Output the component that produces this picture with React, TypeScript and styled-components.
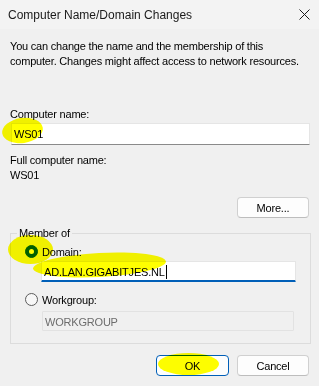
import styled, { createGlobalStyle } from 'styled-components';

const GlobalStyle = createGlobalStyle`
  html, body {
    margin: 0;
    padding: 0;
    background: #f0f0f0;
  }
  body {
    font-family: 'Liberation Sans', Arial, sans-serif;
    font-size: 11px;
    letter-spacing: -0.2px;
    color: #000;
  }
`;

const Dialog = styled.div`
  position: relative;
  width: 319px;
  height: 386px;
  background: #f0f0f0;
  display: flex;
  flex-direction: column;
  overflow: hidden;
`;

const TitleBar = styled.div`
  height: 29px;
  background: #f3f3f3;
  display: flex;
  align-items: center;
  justify-content: space-between;
  padding: 0 9px 0 8px;
  box-sizing: border-box;
`;

const Title = styled.span`
  font-size: 12px;
  letter-spacing: 0;
  color: #1a1a1a;
`;

const Body = styled.div`
  display: flex;
  flex-direction: column;
  padding: 10px 8px 0 10px;
`;

const Text = styled.div<{ $top?: number }>`
  line-height: 15px;
  margin-top: ${(p) => p.$top ?? 0}px;
  white-space: nowrap;
`;

const TextBox = styled.div<{ $top?: number; $focused?: boolean; $disabled?: boolean }>`
  box-sizing: border-box;
  height: ${(p) => (p.$disabled ? 20 : p.$focused ? 21 : 22)}px;
  margin-top: ${(p) => p.$top ?? 0}px;
  padding: 3px 2px 0;
  line-height: 14px;
  background: ${(p) => (p.$disabled ? '#f0f0f0' : '#fff')};
  color: ${(p) => (p.$disabled ? '#6d6d6d' : '#000')};
  border: 1px solid ${(p) => (p.$disabled ? '#e2e2e2' : '#e5e5e5')};
  border-bottom: ${(p) =>
    p.$focused ? '2px solid #005fb8' : p.$disabled ? '1px solid #e2e2e2' : '1px solid #8a8a8a'};
  border-radius: 1px;
  white-space: nowrap;
`;

const Caret = styled.span`
  display: inline-block;
  width: 1px;
  height: 14px;
  margin-left: 1px;
  background: #000;
  vertical-align: -3px;
`;

const Button = styled.button<{ $default?: boolean }>`
  box-sizing: border-box;
  height: 21px;
  padding: 0;
  font-family: inherit;
  font-size: 11px;
  letter-spacing: inherit;
  color: #000;
  background: #fdfdfd;
  border: 1px solid ${(p) => (p.$default ? '#005fb8' : '#d0d0d0')};
  border-bottom-color: ${(p) => (p.$default ? '#005fb8' : '#bdbdbd')};
  border-radius: 4px;
`;

const MoreButton = styled(Button)`
  align-self: flex-end;
  width: 72px;
  margin: 14px 2px 0 0;
`;

const Group = styled.fieldset`
  margin: 8px 0 0;
  padding: 0 14px 12px 6px;
  border: 1px solid #dcdcdc;
  min-inline-size: 0;
  display: flex;
  flex-direction: column;
`;

const Legend = styled.legend`
  padding: 0 2px;
  line-height: 15px;
`;

const RadioRow = styled.div<{ $top: number }>`
  display: flex;
  align-items: center;
  gap: 4px;
  height: 15px;
  margin: ${(p) => p.$top}px 0 0 8px;
`;

const Radio = styled.span<{ $checked?: boolean }>`
  box-sizing: border-box;
  width: 13px;
  height: 13px;
  border-radius: 50%;
  display: flex;
  align-items: center;
  justify-content: center;
  background: ${(p) => (p.$checked ? '#005fb8' : '#f7f7f7')};
  border: 1px solid ${(p) => (p.$checked ? '#005fb8' : '#5c5c5c')};
  &::after {
    content: '';
    display: ${(p) => (p.$checked ? 'block' : 'none')};
    width: 5px;
    height: 5px;
    border-radius: 50%;
    background: #fff;
  }
`;

const Indented = styled.div<{ $right?: number }>`
  margin: 0 ${(p) => p.$right ?? 0}px 0 24px;
  display: flex;
  flex-direction: column;
`;

const Footer = styled.div`
  display: flex;
  justify-content: flex-end;
  gap: 8px;
  margin: 11px 2px 0 0;
`;

const Highlight = styled.span<{ $x: number; $y: number; $w: number; $h: number; $rot?: number }>`
  position: absolute;
  left: ${(p) => p.$x}px;
  top: ${(p) => p.$y}px;
  width: ${(p) => p.$w}px;
  height: ${(p) => p.$h}px;
  border-radius: 50%;
  background: #ffff00;
  mix-blend-mode: multiply;
  transform: rotate(${(p) => p.$rot ?? 0}deg);
  pointer-events: none;
`;

const CloseIcon = () => (
  <svg width="11" height="11" viewBox="0 0 11 11">
    <path d="M0.5 0.5 L10.5 10.5 M10.5 0.5 L0.5 10.5" stroke="#1a1a1a" strokeWidth="1" />
  </svg>
);

export default function App() {
  return (
    <Dialog>
      <GlobalStyle />
      <TitleBar>
        <Title>Computer Name/Domain Changes</Title>
        <CloseIcon />
      </TitleBar>
      <Body>
        <Text>You can change the name and the membership of this</Text>
        <Text>computer. Changes might affect access to network resources.</Text>
        <Text $top={38}>Computer name:</Text>
        <TextBox $top={1} style={{ margin: '1px 1px 0 1px' }}>
          WS01
        </TextBox>
        <Text $top={8}>Full computer name:</Text>
        <Text>WS01</Text>
        <MoreButton>More...</MoreButton>
        <Group>
          <Legend>Member of</Legend>
          <RadioRow $top={3}>
            <Radio $checked />
            <span>Domain:</span>
          </RadioRow>
          <Indented>
            <TextBox $top={2} $focused>
              AD.LAN.GIGABITJES.NL
              <Caret />
            </TextBox>
          </Indented>
          <RadioRow $top={10}>
            <Radio />
            <span>Workgroup:</span>
          </RadioRow>
          <Indented $right={2}>
            <TextBox $top={4} $disabled style={{ marginLeft: 1 }}>
              WORKGROUP
            </TextBox>
          </Indented>
        </Group>
        <Footer>
          <Button $default style={{ width: 73 }}>
            OK
          </Button>
          <Button style={{ width: 72 }}>Cancel</Button>
        </Footer>
      </Body>
      <Highlight $x={2} $y={118} $w={41} $h={25} $rot={-8} />
      <Highlight $x={8} $y={235} $w={45} $h={29} />
      <Highlight $x={33} $y={253} $w={133} $h={24} $rot={-3} />
      <Highlight $x={158} $y={353} $w={61} $h={22} />
    </Dialog>
  );
}
